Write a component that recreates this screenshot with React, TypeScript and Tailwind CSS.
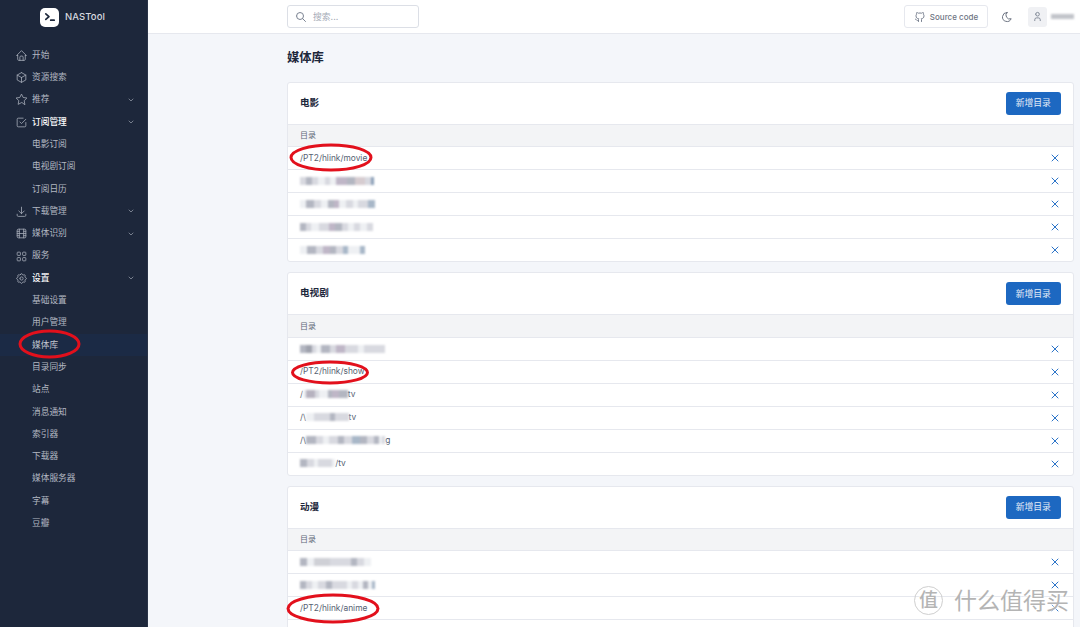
import React from "react";
import {
  TbHome, TbBox, TbStar, TbCheckbox, TbDownload, TbMovie, TbLayoutGrid, TbSettings,
  TbChevronDown, TbSearch, TbBrandGithub, TbMoon, TbUser, TbX,
} from "react-icons/tb";

type NavItem = { label: string; icon?: React.ComponentType<{ className?: string; strokeWidth?: number }>; chevron?: boolean; open?: boolean; active?: boolean };

const nav: NavItem[] = [
  { label: "开始", icon: TbHome },
  { label: "资源搜索", icon: TbBox },
  { label: "推荐", icon: TbStar, chevron: true },
  { label: "订阅管理", icon: TbCheckbox, chevron: true, open: true },
  { label: "电影订阅" },
  { label: "电视剧订阅" },
  { label: "订阅日历" },
  { label: "下载管理", icon: TbDownload, chevron: true },
  { label: "媒体识别", icon: TbMovie, chevron: true },
  { label: "服务", icon: TbLayoutGrid },
  { label: "设置", icon: TbSettings, chevron: true, open: true },
  { label: "基础设置" },
  { label: "用户管理" },
  { label: "媒体库", active: true },
  { label: "目录同步" },
  { label: "站点" },
  { label: "消息通知" },
  { label: "索引器" },
  { label: "下载器" },
  { label: "媒体服务器" },
  { label: "字幕" },
  { label: "豆瓣" },
];

type Seg = [number, string];
type Row = { text?: string; blur?: Seg[]; k?: number; tail?: string; lead?: string };

const G = "#b3b6c1", L = "#d8d9e0", P = "#bfb6c7", B = "#a8b7c8", W = "#eef0f3";

const movie: Row[] = [
  { text: "/PT2/hlink/movie" },
  { k: 1.13, blur: [[5, L], [6, G], [5, L], [6, W], [5, L], [5, W], [10, P], [7, G], [9, "#d6ccd0"], [5, L], [3, "#8ba0b8"]] },
  { k: 1.25, blur: [[5, W], [6, G], [6, L], [5, W], [5, G], [4, P], [6, W], [5, L], [4, W], [8, L], [6, B]] },
  { k: 1.1, blur: [[5, G], [5, L], [7, W], [9, L], [6, P], [6, G], [6, L], [5, W], [6, L], [6, W], [5, L]] },
  { k: 1.15, blur: [[6, W], [8, G], [6, L], [6, P], [5, G], [6, L], [5, B], [6, W], [4, W], [5, B]] },
];
const show: Row[] = [
  { k: 1.07, blur: [[6, G], [5, "#9fa2ad"], [4, L], [5, W], [8, G], [6, L], [8, P], [6, L], [6, L], [6, W], [8, L], [6, L], [6, L]] },
  { text: "/PT2/hlink/show" },
  { lead: "/", k: 1.12, blur: [[3, W], [8, "#b6b2bf"], [3, L], [8, W], [4, G], [6, P], [8, G]], tail: "tv" },
  { lead: "/\\", k: 1.25, blur: [[6, W], [7, L], [6, L], [4, G], [6, L], [5, L]], tail: "tv" },
  { lead: "/\\", k: 1.22, blur: [[8, G], [6, L], [5, W], [7, L], [5, G], [7, L], [6, B], [6, G], [6, L], [4, G], [2, W], [3, L]], tail: "g" },
  { k: 1.1, blur: [[6, G], [7, L], [3, W], [7, L], [6, L], [3, W]], tail: "/tv" },
];
const anime: Row[] = [
  { k: 1.3, blur: [[5, G], [6, W], [12, "#cfd0d6"], [8, L], [8, L], [5, G], [5, L], [6, W]] },
  { k: 1.07, blur: [[6, G], [5, L], [6, W], [7, L], [6, G], [8, L], [6, L], [5, W], [5, L], [5, W], [5, G], [3, W], [3, B]] },
  { text: "/PT2/hlink/anime" },
  { text: "" },
];

function DirRow({ row }: { row: Row }) {
  return (
    <div className="flex h-[23px] items-center justify-between border-t border-[#e6e8ee] pl-[12px] pr-[12px] text-[8.4px] text-[#565f72]">
      <div className="flex items-center">
        {row.lead && <span>{row.lead}</span>}
        {row.blur && (
          <div className="flex h-[8px] items-center blur-[1px]">
            {row.blur.map(([w, c], i) => (
              <span key={i} className="h-full" style={{ width: w * (row.k ?? 1), background: c }} />
            ))}
          </div>
        )}
        {row.tail && <span>{row.tail}</span>}
        {row.text && <span>{row.text}</span>}
      </div>
      {row.text !== "" && <TbX className="h-[12px] w-[12px] text-[#2b74c9]" />}
    </div>
  );
}

function Card({ title, rows }: { title: string; rows: Row[] }) {
  return (
    <section className="rounded-[3px] border border-[#e6e8ee] bg-white">
      <div className="flex h-[41px] items-center justify-between pl-[12px] pr-[12px]">
        <h3 className="text-[9.6px] font-semibold text-[#1d273b]">{title}</h3>
        <button className="flex h-[23px] w-[55.5px] items-center justify-center rounded-[3px] bg-[#1d68c1] text-[8.8px] text-[#e6eef8]">
          新增目录
        </button>
      </div>
      <div className="flex h-[22.5px] items-center border-t border-[#e6e8ee] bg-[#f3f4f6] pl-[12px] text-[8px] text-[#5f6878]">
        目录
      </div>
      {rows.map((r, i) => (
        <DirRow key={i} row={r} />
      ))}
    </section>
  );
}

export default function App() {
  return (
    <div
      className="relative flex h-[627px] w-[1080px] overflow-hidden bg-[#f4f6fa]"
      style={{ fontFamily: 'Inter, "Noto Sans CJK SC", sans-serif' }}
    >
      <aside className="flex h-full w-[148px] shrink-0 flex-col border-r border-[#2a3448] bg-[#1d273b]">
        <div className="flex h-[34px] items-center pl-[40px]">
          <div className="flex h-[19px] w-[19px] items-center justify-center rounded-[5px] bg-white">
            <svg viewBox="0 0 20 20" className="h-[14px] w-[14px]" fill="none" stroke="#1d273b" strokeWidth="2.4" strokeLinecap="round" strokeLinejoin="round">
              <path d="M4 5.5 8.5 9.5 4 13.5" />
              <path d="M11 14.5h5" />
            </svg>
          </div>
          <span className="ml-[6px] text-[9.5px] font-medium tracking-[0.1px] text-[#d5d8df]">NASTool</span>
        </div>
        <nav className="mt-[10.2px] flex flex-col">
          {nav.map((n) => {
            const Icon = n.icon;
            return (
              <div
                key={n.label}
                className={`flex h-[22.3px] items-center pl-[15px] pr-[12px] text-[8.7px] ${
                  n.active ? "bg-[#1b2a45] text-[#c3c8d1]" : n.open ? "font-medium text-white" : "text-[#b3b8c2]"
                }`}
              >
                <span className="flex w-[17px] shrink-0 items-center">
                  {Icon && <Icon strokeWidth={1.5} className="h-[13px] w-[13px] text-[#a5abb7]" />}
                </span>
                <span className="flex-1">{n.label}</span>
                {n.chevron && <TbChevronDown className="h-[8px] w-[8px] text-[#a5abb7]" />}
              </div>
            );
          })}
        </nav>
      </aside>

      <div className="flex min-w-0 flex-1 flex-col">
        <header className="flex h-[34px] shrink-0 items-center border-b border-[#e6e8ee] bg-white pl-[139px] pr-[6px]">
          <div className="flex h-[23px] w-[132px] items-center rounded-[3px] border border-[#dcdfe6] pl-[7px] text-[8.8px] text-[#a5abb7]">
            <TbSearch className="h-[12px] w-[12px] text-[#7b8392]" />
            <span className="ml-[6px]">搜索...</span>
          </div>
          <div className="ml-auto flex items-center">
            <div className="flex h-[23px] w-[84px] items-center justify-center rounded-[3px] border border-[#e6e8ee] text-[8px] font-medium text-[#6e7583]">
              <TbBrandGithub className="mr-[4px] h-[12px] w-[12px] text-[#7b8392]" />
              Source code
            </div>
            <TbMoon className="ml-[13px] h-[12px] w-[12px] text-[#6e7583]" />
            <div className="ml-[15px] flex h-[20px] w-[19px] items-center justify-center rounded-[3px] bg-[#f0f1f4]">
              <TbUser className="h-[11px] w-[11px] text-[#7b8392]" />
            </div>
            <div className="ml-[4px] h-[5px] w-[23px] bg-[#c2c4ca] blur-[1px]" />
          </div>
        </header>

        <main className="flex flex-col pl-[139px] pr-[6px]">
          <h2 className="flex h-[47.5px] items-center text-[12.3px] font-semibold text-[#1d273b]">媒体库</h2>
          <div className="flex flex-col gap-[10px]">
            <Card title="电影" rows={movie} />
            <Card title="电视剧" rows={show} />
            <Card title="动漫" rows={anime} />
          </div>
        </main>
      </div>

      <svg className="pointer-events-none absolute left-0 top-0 h-[627px] w-[1080px]" viewBox="0 0 1080 627" fill="none" stroke="#e2101c" strokeWidth="3">
        <ellipse cx="49.5" cy="344" rx="29.5" ry="13" />
        <ellipse cx="331" cy="157.5" rx="40" ry="12.5" />
        <ellipse cx="330" cy="372.5" rx="37.5" ry="10.5" />
        <ellipse cx="333" cy="608.5" rx="45" ry="13.5" />
      </svg>

      <div className="pointer-events-none absolute bottom-[9px] left-[914px] flex items-center text-[#b4b4b4] [text-shadow:0_0_3px_#fff,0_0_3px_#fff]">
        <div className="flex h-[29px] w-[29px] items-center justify-center rounded-full border border-[#cfcfcf] text-[19px] font-medium">
          值
        </div>
        <span className="ml-[11px] text-[23px]">什么值得买</span>
      </div>
    </div>
  );
}
